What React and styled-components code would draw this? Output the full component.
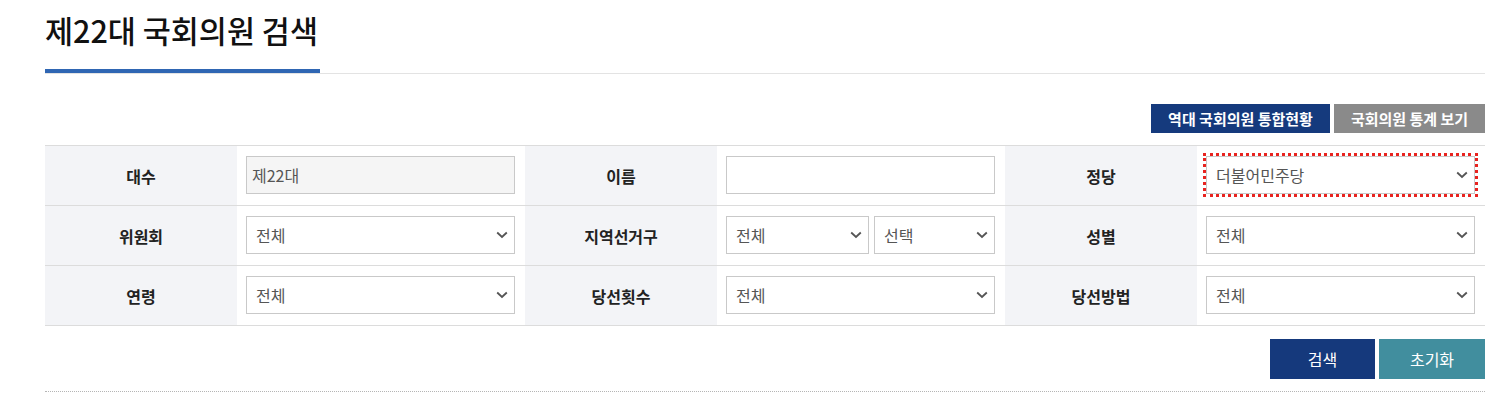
import React from 'react';
import styled, { createGlobalStyle } from 'styled-components';

const GlobalStyle = createGlobalStyle`
  html, body {
    margin: 0;
    padding: 0;
    background: #fff;
    font-family: "Noto Sans CJK KR", "Noto Sans", sans-serif;
    color: #222;
  }
  * { box-sizing: border-box; }
`;

const Page = styled.div`
  width: 1440px;
  margin-left: 45px;
  padding-top: 6px;
`;

const TitleBar = styled.div`
  border-bottom: 1px solid #e3e3e3;
  height: 68px;
`;

const Title = styled.h2`
  display: inline-block;
  width: 275px;
  margin: 0;
  height: 67px;
  font-size: 30.5px;
  font-weight: 500;
  line-height: 40px;
  color: #111;
  white-space: nowrap;
  border-bottom: 4px solid #2f66b3;
  margin-bottom: -2px;
  padding-top: 4px;
`;

const LinkRow = styled.div`
  display: flex;
  justify-content: flex-end;
  gap: 4px;
  margin-top: 30px;
`;

const LinkButton = styled.button`
  width: ${(p) => p.$w}px;
  height: 29px;
  padding: 0;
  border: 0;
  background: ${(p) => p.$bg};
  color: #fff;
  font-family: inherit;
  font-size: 15px;
  font-weight: 700;
  line-height: 29px;
  cursor: pointer;
`;

const Grid = styled.div`
  display: grid;
  grid-template-columns: 192px 288px 192px 288px 192px 288px;
  border-top: 1px solid #dcdcdc;
  margin-top: 12px;
`;

const Label = styled.div`
  height: 60px;
  background: #f3f4f7;
  border-bottom: 1px solid #dcdcdc;
  display: flex;
  align-items: center;
  justify-content: center;
  font-size: 16px;
  font-weight: 700;
  color: #222;
`;

const Cell = styled.div`
  height: 60px;
  border-bottom: 1px solid #dcdcdc;
  display: flex;
  align-items: center;
  gap: 5px;
  padding: 0 10px 1px 9px;
`;

const TextInput = styled.input`
  width: 100%;
  height: 38px;
  border: 1px solid #c9c9c9;
  background: ${(p) => (p.readOnly ? '#f5f5f5' : '#fff')};
  padding: 0 5px;
  font-family: inherit;
  font-size: 16px;
  color: #555;
  outline: none;
`;

const SelectBox = styled.div`
  flex: ${(p) => (p.$w ? `0 0 ${p.$w}px` : '1 1 auto')};
  height: 38px;
  border: 1px solid #c9c9c9;
  background: #fff;
  display: flex;
  align-items: center;
  justify-content: space-between;
  padding: 0 6px 0 9px;
  font-size: 16px;
  color: #555;
  outline: ${(p) => (p.$focus ? '3px dotted #e8231f' : 'none')};
  outline-offset: 0;
`;

const Chevron = styled.svg`
  width: 12px;
  height: 8px;
  flex: none;
`;

const ActionRow = styled.div`
  display: flex;
  justify-content: flex-end;
  gap: 4px;
  margin-top: 13px;
  padding-bottom: 12px;
  border-bottom: 1px dotted #b5b5b5;
`;

const ActionButton = styled.button`
  width: ${(p) => p.$w}px;
  height: 40px;
  border: 0;
  background: ${(p) => p.$bg};
  color: #fff;
  font-family: inherit;
  font-size: 16px;
  font-weight: 400;
  cursor: pointer;
`;

function Select({ value, width, focus }) {
  return (
    <SelectBox $w={width} $focus={focus} role="combobox">
      <span>{value}</span>
      <Chevron viewBox="0 0 12 8">
        <polyline points="1.2,1.5 6,6 10.8,1.5" fill="none" stroke="#555" strokeWidth="1.8" />
      </Chevron>
    </SelectBox>
  );
}

export default function App() {
  return (
    <>
      <GlobalStyle />
      <Page>
        <TitleBar>
          <Title>제22대 국회의원 검색</Title>
        </TitleBar>

        <LinkRow>
          <LinkButton $bg="#153a7d" $w={179}>역대 국회의원 통합현황</LinkButton>
          <LinkButton $bg="#8a8a8a" $w={151}>국회의원 통계 보기</LinkButton>
        </LinkRow>

        <Grid>
          <Label>대수</Label>
          <Cell><TextInput readOnly value="제22대" /></Cell>
          <Label>이름</Label>
          <Cell><TextInput defaultValue="" /></Cell>
          <Label>정당</Label>
          <Cell><Select value="더불어민주당" focus /></Cell>

          <Label>위원회</Label>
          <Cell><Select value="전체" /></Cell>
          <Label>지역선거구</Label>
          <Cell>
            <Select value="전체" width={143} />
            <Select value="선택" />
          </Cell>
          <Label>성별</Label>
          <Cell><Select value="전체" /></Cell>

          <Label>연령</Label>
          <Cell><Select value="전체" /></Cell>
          <Label>당선횟수</Label>
          <Cell><Select value="전체" /></Cell>
          <Label>당선방법</Label>
          <Cell><Select value="전체" /></Cell>
        </Grid>

        <ActionRow>
          <ActionButton $bg="#15397c" $w={105}>검색</ActionButton>
          <ActionButton $bg="#418e9e" $w={106}>초기화</ActionButton>
        </ActionRow>
      </Page>
    </>
  );
}
